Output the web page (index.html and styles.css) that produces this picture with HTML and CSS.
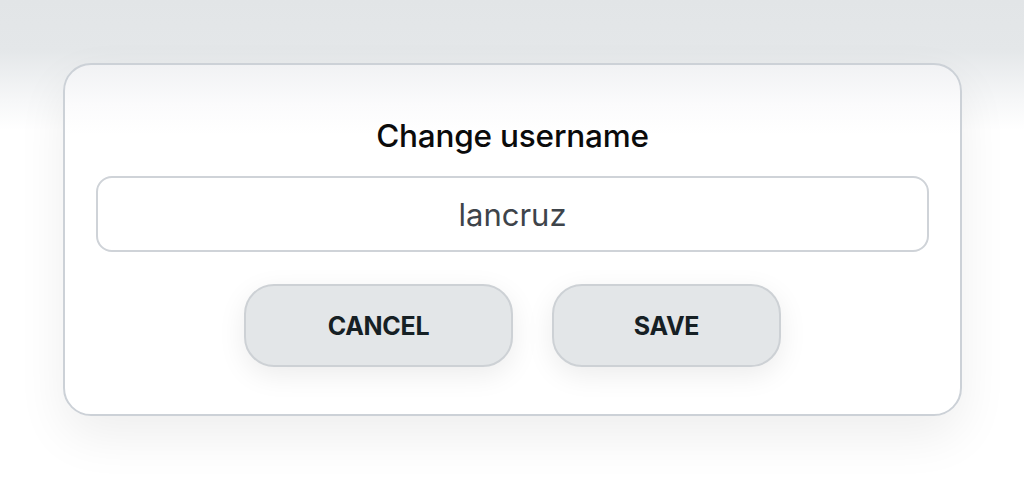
FILE: index.html
```html
<!DOCTYPE html>
<html>
<head>
<meta charset="utf-8">
<link rel="stylesheet" href="styles.css">
</head>
<body>
<div class="page">
  <div class="card">
    <h1 class="title">Change username</h1>
    <div class="field">lancruz</div>
    <div class="actions">
      <button class="btn btn-cancel">CANCEL</button>
      <button class="btn btn-save">SAVE</button>
    </div>
  </div>
</div>
</body>
</html>
```
FILE: styles.css
```css
html, body {
  margin: 0;
  padding: 0;
}
body {
  width: 1024px;
  height: 482px;
  overflow: hidden;
  background: linear-gradient(180deg, #e2e5e7 0px, #e4e7e9 50px, #f6f7f8 100px, #ffffff 130px);
  font-family: Inter, "Open Sans", sans-serif;
}
.page {
  padding: 63px 62px 0 63px;
}
.card {
  box-sizing: border-box;
  width: 899px;
  height: 353px;
  border: 2px solid #ccd1d7;
  border-radius: 28px;
  background: linear-gradient(180deg, #f1f2f4 0px, #fbfbfc 40px, #ffffff 70px);
  box-shadow: 0 20px 50px rgba(0, 0, 0, 0.07);
  padding: 52px 31px 0 31px;
  display: flex;
  flex-direction: column;
  align-items: stretch;
}
.title {
  margin: 0;
  text-align: center;
  font-size: 31.5px;
  line-height: 38px;
  font-weight: 500;
  color: #0b0b0b;
  letter-spacing: -0.2px;
}
.field {
  margin-top: 21px;
  height: 76px;
  box-sizing: border-box;
  border: 2px solid #cfd3d8;
  border-radius: 16px;
  background: #fff;
  display: flex;
  align-items: center;
  justify-content: center;
  font-size: 31px;
  color: #3e444a;
}
.actions {
  margin-top: 32px;
  display: flex;
  justify-content: center;
  gap: 39px;
}
.btn {
  height: 83px;
  box-sizing: border-box;
  border: 2px solid #cdd1d5;
  border-radius: 30px;
  background: #e3e6e8;
  color: #162024;
  font-family: Inter, "Open Sans", sans-serif;
  font-size: 25px;
  font-weight: 700;
  letter-spacing: -0.3px;
  box-shadow: 0 8px 28px rgba(0, 0, 0, 0.08);
  cursor: pointer;
  padding: 0;
}
.btn-cancel {
  width: 269px;
}
.btn-save {
  width: 229px;
}
```
